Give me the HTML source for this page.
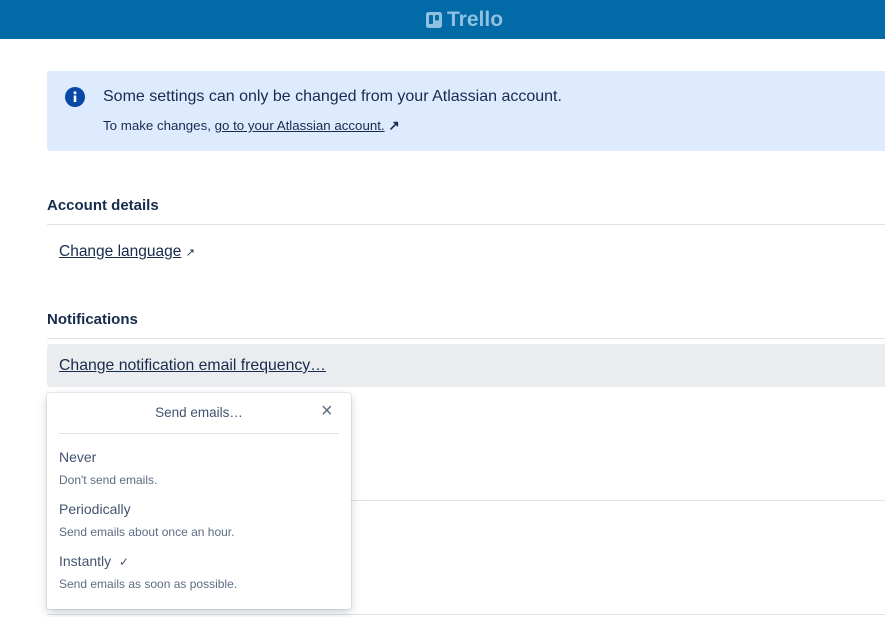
<!DOCTYPE html>
<html><head><style>
*{margin:0;padding:0;box-sizing:border-box}
body{width:885px;height:617px;overflow:hidden;background:#fff;font-family:"Liberation Sans",sans-serif;position:relative;color:#172b4d}
.abs{position:absolute}
.hdr{left:0;top:0;width:885px;height:39px;background:#026aa7}
.logo{left:426px;top:8px;color:#8fc0e0;font-weight:bold;font-size:21px;display:flex;align-items:center;gap:5px}
.banner{left:47px;top:71px;width:838px;height:80px;background:#deebff;border-radius:3px 0 0 3px}
a{color:#172b4d;text-decoration:underline}
.hline{height:1px;background:#dfe1e6}
.pop{left:47px;top:393px;width:304px;height:216px;background:#fff;border-radius:3px;box-shadow:0 4px 10px rgba(9,30,66,.2),0 0 0 1px rgba(9,30,66,.08)}
.t{font-size:14px;color:#44546f}
.s{font-size:12px;color:#5e6c84}
</style></head><body>
<div class="abs hdr"></div>
<div class="abs logo"><svg width="16" height="16"><rect width="16" height="16" rx="2.5" fill="#8fc0e0"/><rect x="3" y="3" width="4" height="9" rx="1" fill="#026aa7"/><rect x="9" y="3" width="4" height="5.5" rx="1" fill="#026aa7"/></svg>Trello</div>
<div class="abs banner"></div>
<svg class="abs" style="left:65px;top:87px" width="20" height="20"><circle cx="10" cy="10" r="10" fill="#0747a6"/><rect x="8.7" y="8.5" width="2.6" height="6.5" fill="#fff"/><circle cx="10" cy="5.8" r="1.5" fill="#fff"/></svg>
<div class="abs" style="left:103px;top:88px;font-size:16px;color:#172b4d">Some settings can only be changed from your Atlassian account.</div>
<div class="abs" style="left:103px;top:118px;font-size:13.3px;color:#172b4d">To make changes, <a>go to your Atlassian account.</a> <span style="font-weight:bold">↗</span></div>
<div class="abs" style="left:47px;top:197px;font-size:15px;font-weight:bold">Account details</div>
<div class="abs hline" style="left:47px;top:224px;width:838px"></div>
<div class="abs" style="left:59px;top:243px;font-size:15.5px"><a>Change language</a> <span style="font-size:11px">↗</span></div>
<div class="abs" style="left:47px;top:311px;font-size:15px;font-weight:bold">Notifications</div>
<div class="abs hline" style="left:47px;top:338px;width:838px"></div>
<div class="abs" style="left:47px;top:344px;width:838px;height:43px;background:#ebecf0;border-radius:3px 0 0 3px"></div>
<div class="abs" style="left:59px;top:357px;font-size:15.8px"><a>Change notification email frequency…</a></div>
<div class="abs hline" style="left:351px;top:500px;width:534px"></div>
<div class="abs hline" style="left:47px;top:614px;width:838px"></div>
<div class="abs pop">
 <div class="abs t" style="left:0;width:304px;text-align:center;top:12px;font-size:13.5px">Send emails…</div>
 <div class="abs" style="left:274px;top:7px;font-size:20px;color:#5e6c84">×</div>
 <div class="abs hline" style="left:12px;top:40px;width:280px"></div>
 <div class="abs t" style="left:12px;top:56px">Never</div>
 <div class="abs s" style="left:12px;top:80px">Don't send emails.</div>
 <div class="abs t" style="left:12px;top:108px">Periodically</div>
 <div class="abs s" style="left:12px;top:132px">Send emails about once an hour.</div>
 <div class="abs t" style="left:12px;top:160px">Instantly <span style="font-size:12px;margin-left:4px">✓</span></div>
 <div class="abs s" style="left:12px;top:184px">Send emails as soon as possible.</div>
</div>
</body></html>
